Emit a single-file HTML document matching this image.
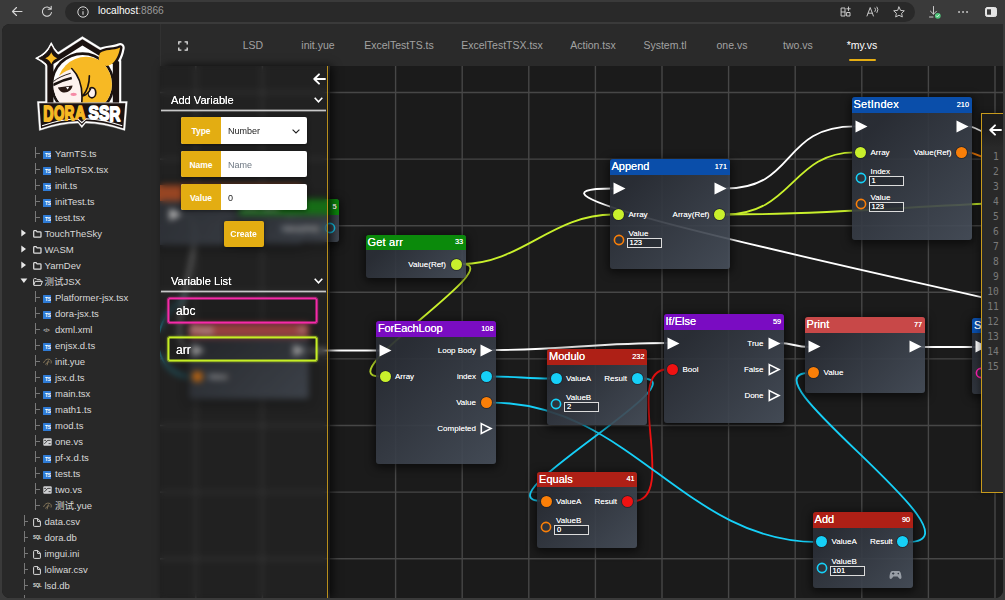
<!DOCTYPE html>
<html lang="en"><head><meta charset="utf-8"><title>Dora SSR</title>
<style>
*{box-sizing:border-box;margin:0;padding:0}
html,body{width:1005px;height:600px;overflow:hidden;background:#3a3a3a;font-family:"Liberation Sans","Noto Sans CJK SC",sans-serif}
#chrome{position:absolute;left:0;top:0;width:1005px;height:24px;background:#3a3a3a}
#url{position:absolute;left:65px;top:1.5px;width:850px;height:20px;border-radius:10px;background:#292929}
#url span{position:absolute;top:3.7px;font-size:10.2px;line-height:12px;color:#fff}
#win{position:absolute;left:2px;top:24px;width:1001px;height:573.7px;background:#1a1a1a;border-radius:8px 0 8px 8px;overflow:hidden}
#side{position:absolute;left:0;top:0;width:158px;height:574px;background:#282828}
#tabs{position:absolute;left:158px;top:0;width:843px;height:42px;background:#2a2a2a;border-left:1px solid #313131}
.tab{position:absolute;top:15px;width:120px;text-align:center;font-size:10.5px;line-height:12px;color:#a2a2a2}
.tab.on{color:#fff}
.tabul{position:absolute;left:687.5px;top:35px;width:27.5px;height:1.8px;background:#e6ae12;border-radius:1px}
#canvas{position:absolute;left:158px;top:42px;width:843px;height:532px;background:#1b1b1b;overflow:hidden}
#cv{position:absolute;left:-160px;top:-66px;width:1005px;height:600px}
#grid line{stroke:#474747;stroke-width:1.4}
#wires path{fill:none;stroke-width:1.85;stroke-linecap:round}
.node{position:absolute;border-radius:3px;background:linear-gradient(135deg,rgba(42,46,54,.93) 20%,rgba(71,79,91,.9) 100%);box-shadow:0 2px 9px 2px rgba(0,0,0,.55);font-family:"Liberation Sans","DejaVu Sans",sans-serif}
.hd{position:absolute;left:0;top:0;right:0;height:15.5px;border-radius:3px 3px 0 0}
.tt{position:absolute;left:2px;top:1px;font-size:11px;line-height:13px;color:#fff;text-shadow:0 0 .3px #fff}
.id{position:absolute;right:2.5px;top:3.5px;font-size:7.3px;line-height:8px;color:#fff;text-shadow:0 0 .4px #fff}
.pin{position:absolute;display:block}
.dot{position:absolute;width:11px;height:11px;border-radius:50%;box-shadow:0 0 0 .8px rgba(24,28,36,.7)}
.ring{position:absolute;width:11px;height:11px;border-radius:50%;border:1.6px solid #fff}
.lb{position:absolute;font-size:8px;line-height:10px;color:#fff;white-space:nowrap;text-shadow:0 0 .3px rgba(255,255,255,.6)}
.in{position:absolute;width:35px;height:10px;border:1px solid #dcdcdc;font-size:7.5px;line-height:8px;color:#fff;text-shadow:0 0 .4px #fff;padding-left:2px;background:rgba(30,34,40,.5)}
#lp{position:absolute;left:158px;top:42px;width:167.5px;height:532px;background:rgba(46,46,46,.32);-webkit-backdrop-filter:blur(3.4px);backdrop-filter:blur(3.4px);border-right:1px solid #b98f1c;box-shadow:4px 0 9px rgba(0,0,0,.75)}
.sec{position:absolute;left:1px;width:165px;height:18px}
.sec i{position:absolute;left:0;top:15.6px;width:165px;height:3px;background:linear-gradient(180deg,rgba(200,200,200,0) 0,rgba(200,200,200,.35) 16%,#c8c8c8 34%,#c8c8c8 66%,rgba(200,200,200,.35) 84%,rgba(200,200,200,0) 100%)}
.sec span{position:absolute;left:10px;top:1px;font-size:11.1px;line-height:13px;color:#fff;text-shadow:0 0 .5px #fff}
.sec svg{position:absolute;left:153px;top:4px}
.row{position:absolute;left:21px;width:126px;height:26.5px;background:#fff;border-radius:2px;overflow:hidden;box-shadow:0 1px 4px rgba(0,0,0,.5)}
.row b{position:absolute;left:0;top:0;width:40px;height:100%;background:#e3ad12;color:#fff;font-size:8.5px;line-height:28px;text-align:center;font-weight:bold}
.row span{position:absolute;left:47px;top:0;font-size:9px;line-height:28.5px;color:#1c1c1c}
.btn{position:absolute;left:63.5px;top:154.6px;width:40px;height:26.5px;background:#e3ad12;border-radius:2px;color:#fff;font-size:8.5px;line-height:26.5px;text-align:center;font-weight:bold;box-shadow:0 1px 4px rgba(0,0,0,.5)}
.var{position:absolute;left:7.6px;width:149.4px;height:24.8px;border:1px solid;background:rgba(10,10,10,.13);color:#fff;font-size:12px;line-height:25px;padding-left:7.5px;border-radius:1px;text-shadow:0 0 .5px #fff}
#rp{position:absolute;left:979.2px;top:89px;width:30px;height:379.5px;background:#292929;border:1px solid #c79a1c;box-shadow:-2px 0 6px rgba(0,0,0,.4)}
#rp .h{position:absolute;left:0;top:0;width:100%;height:34px;background:linear-gradient(180deg,#1d1d1d 40%,#292929)}
.ln{position:absolute;right:11.5px;font-family:"DejaVu Sans Mono","Liberation Mono",monospace;font-size:9.6px;line-height:12px;color:#7a7a7a}
.tr{position:absolute;left:0;width:158px;height:16px}
.tr .nm{position:absolute;top:2px;font-size:9.5px;line-height:12px;color:#d8d8d8;white-space:nowrap}
.icw{position:absolute;top:0;height:16px;width:10px}
.ic{position:absolute;left:0;top:4px;display:block}
.ic.ts{width:8px;height:8px;top:4.5px;background:#2f7bd6;color:#fff;font-size:5px;line-height:5px;font-weight:bold;padding:2.8px 0 0 1.6px;letter-spacing:-.2px;border-radius:.5px;overflow:hidden}
.ic.sql{width:9px;height:6px;top:5px;color:#ddd;font-size:4.5px;line-height:6px;font-weight:bold;letter-spacing:-.3px}
.ic.xml{width:9px;height:6px;top:5px;color:#bbb;font-size:5px;line-height:6px;font-weight:bold;letter-spacing:-.4px}
.br{position:absolute;top:1px;width:6px;height:10.5px;border-left:1px solid #787878}
.br:after{content:"";position:absolute;left:0;top:5.5px;width:3.8px;height:1px;background:#787878}
.ar{position:absolute;display:block}
</style></head><body>
<div id="chrome">
<svg style="position:absolute;left:0;top:0" width="1005" height="24" viewBox="0 0 1005 24" fill="none" stroke="#d6d6d6" stroke-width="1.1" stroke-linecap="round" stroke-linejoin="round">
<path d="M22 11.5 H12.5 M16.5 7.5 L12.5 11.5 L16.5 15.5"/>
<path d="M50.8 9 A4.6 4.6 0 1 0 51.5 12.5 M51.2 6.2 V9.2 H48.2"/>
</svg>
<div id="url"><svg style="position:absolute;left:12px;top:4px" width="12" height="12" viewBox="0 0 12 12"><circle cx="6" cy="6" r="5.2" fill="none" stroke="#d6d6d6" stroke-width="1"/><path d="M6 5.3 V8.8 M6 3.2 V4" stroke="#d6d6d6" stroke-width="1.1"/></svg><span style="left:33px">localhost<span style="position:static;color:#9a9a9a">:8866</span></span></div>
<svg style="position:absolute;left:830px;top:-0.5px" width="175" height="24" viewBox="830 0 175 24" fill="none" stroke="#c8c8c8" stroke-width="1" stroke-linecap="round" stroke-linejoin="round">
<path d="M841.5 8 H845 V16 H841.5 Z M841.5 12 H845 M847 12.5 H850 V16 H847 Z M848.5 7 V10.5 M846.8 8.8 H850.2"/>
<path d="M867 16 L870.2 7.5 L873.4 16 M868.2 13.2 H872.2 M875 8 Q876.5 9.5 875 11.5 M877 7 Q879 9.5 877 12.5"/>
<path d="M899 7 L900.6 10.4 L904.3 10.8 L901.6 13.3 L902.3 17 L899 15.2 L895.7 17 L896.4 13.3 L893.7 10.8 L897.4 10.4 Z"/>
<path d="M933.5 6.5 V14 M930.5 11.2 L933.5 14.2 L936.5 11.2 M929.5 17 H933"/>
<circle cx="937.8" cy="15.8" r="2.9" fill="#4fc47a" stroke="none"/><path d="M936.4 15.9 L937.4 16.9 L939.2 14.8" stroke="#fff" stroke-width=".8"/>
<path d="M959 12 h.1 M963 12 h.1 M967 12 h.1" stroke-width="1.8"/>
<rect x="985.5" y="7.5" width="11" height="9" rx="1.8" fill="#e4e4e4" stroke="#e4e4e4"/><rect x="987" y="9.3" width="4" height="5.4" fill="#3a3a3a" stroke="none"/>
</svg>
<div style="position:absolute;left:800px;top:2px;width:25px;height:20px"></div>
</div>
<div id="win">
<div id="canvas"><div id="cv">
<svg id="grid" style="position:absolute;left:0;top:0" width="1005" height="600"><line x1="129.2" y1="66" x2="129.2" y2="600"/><line x1="195.8" y1="66" x2="195.8" y2="600"/><line x1="262.4" y1="66" x2="262.4" y2="600"/><line x1="329.0" y1="66" x2="329.0" y2="600"/><line x1="395.6" y1="66" x2="395.6" y2="600"/><line x1="462.2" y1="66" x2="462.2" y2="600"/><line x1="528.8" y1="66" x2="528.8" y2="600"/><line x1="595.4" y1="66" x2="595.4" y2="600"/><line x1="662.0" y1="66" x2="662.0" y2="600"/><line x1="728.6" y1="66" x2="728.6" y2="600"/><line x1="795.2" y1="66" x2="795.2" y2="600"/><line x1="861.8" y1="66" x2="861.8" y2="600"/><line x1="928.4" y1="66" x2="928.4" y2="600"/><line x1="995.0" y1="66" x2="995.0" y2="600"/><line x1="1061.6" y1="66" x2="1061.6" y2="600"/><line x1="160" y1="92.5" x2="1005" y2="92.5"/><line x1="160" y1="159.1" x2="1005" y2="159.1"/><line x1="160" y1="225.7" x2="1005" y2="225.7"/><line x1="160" y1="292.3" x2="1005" y2="292.3"/><line x1="160" y1="358.9" x2="1005" y2="358.9"/><line x1="160" y1="425.5" x2="1005" y2="425.5"/><line x1="160" y1="492.1" x2="1005" y2="492.1"/><line x1="160" y1="558.7" x2="1005" y2="558.7"/><line x1="160" y1="625.3" x2="1005" y2="625.3"/></svg>
<svg id="wires" style="position:absolute;left:0;top:0" width="1005" height="600"><path d="M300 350.5 L380 350.5" stroke="#fff"/><path d="M462 264 C521.1 264 551.8 214.5 613 214.5" stroke="#c9f02c"/><path d="M462 264 C510.9 264 327.0 376.5 380 376.5" stroke="#c9f02c"/><path d="M493 350 C563.0 350 597.0 343 667 343" stroke="#fff"/><path d="M492 376.5 C517.0 376.5 526.0 378.5 551 378.5" stroke="#16d0f8"/><path d="M613 188.5 C431.1 188.5 1170.0 330 1100 330" stroke="#fff"/><path d="M725 188.5 C797.6 188.5 779.8 126.4 855 126.4" stroke="#fff"/><path d="M725 214.5 C793.2 214.5 791.4 152.4 855 152.4" stroke="#c9f02c"/><path d="M725 214.5 C830 214.5 900 207 1010 202.5" stroke="#c9f02c"/><path d="M967 126.4 C977.0 126.4 980.0 133 990 133" stroke="#fff"/><path d="M967 152.4 C977.0 152.4 980.0 158.5 990 158.5" stroke="#fa7f08"/><path d="M642 378.5 C704.2 378.5 476.3 501 542 501" stroke="#16d0f8"/><path d="M633.5 501 C679.3 501 621.8 369.5 667 369.5" stroke="#f01212"/><path d="M492 402.6 C629.1 402.6 685.1 542 817 542" stroke="#16d0f8"/><path d="M908 542 C991.5 542 739.0 373 809 373" stroke="#16d0f8"/><path d="M779 343 C793.0 343 795.0 347 809 347" stroke="#fff"/><path d="M921 347 L980 347" stroke="#fff"/><path d="M181 214 C222 214 152 350 193 350" stroke="rgba(255,255,255,.75)"/><path d="M193 377 C166 377 150 350 163 322 C168 311 176 303 186 297" stroke="rgba(22,208,248,.7)"/></svg>
<div class="node " style="left:365.5px;top:234.7px;width:100px;height:43.3px"><div class="hd" style="background:#0b8a0b"><span class="tt" style="letter-spacing:0.2px">Get arr</span><span class="id">33</span></div><span class="lb r" style="right:19.5px;top:25.7px">Value(Ref)</span><i class="dot" style="left:85.2px;top:24.5px;background:#c9f02c"></i></div><div class="node " style="left:609.5px;top:159.3px;width:120px;height:110px"><div class="hd" style="background:#0a4eaa"><span class="tt" style="letter-spacing:0px">Append</span><span class="id">171</span></div><svg class="pin" style="left:3px;top:22.5px" width="13" height="13" viewBox="0 0 13 13"><path d="M0.5 0.5 L12.5 6.5 L0.5 12.5 Z" fill="#fff"/></svg><svg class="pin" style="left:104px;top:22.5px" width="13" height="13" viewBox="0 0 13 13"><path d="M0.5 0.5 L12.5 6.5 L0.5 12.5 Z" fill="#fff"/></svg><i class="dot" style="left:3.5px;top:49.5px;background:#c9f02c"></i><span class="lb" style="left:19px;top:50.7px">Array</span><span class="lb r" style="right:20px;top:50.7px">Array(Ref)</span><i class="dot" style="left:104.5px;top:49.5px;background:#c9f02c"></i><svg class="pin" style="left:3px;top:75px" width="12" height="12" viewBox="0 0 12 12"><circle cx="6" cy="6" r="4.6" fill="none" stroke="#fa7f08" stroke-width="1.6"/></svg><span class="lb" style="left:19px;top:70px">Value</span><span class="in" style="left:17px;top:78.8px">123</span></div><div class="node " style="left:851.5px;top:97px;width:120px;height:143px"><div class="hd" style="background:#0a4eaa"><span class="tt" style="letter-spacing:0.25px">SetIndex</span><span class="id">210</span></div><svg class="pin" style="left:3px;top:22.5px" width="13" height="13" viewBox="0 0 13 13"><path d="M0.5 0.5 L12.5 6.5 L0.5 12.5 Z" fill="#fff"/></svg><svg class="pin" style="left:104px;top:22.5px" width="13" height="13" viewBox="0 0 13 13"><path d="M0.5 0.5 L12.5 6.5 L0.5 12.5 Z" fill="#fff"/></svg><i class="dot" style="left:3.5px;top:49.5px;background:#c9f02c"></i><span class="lb" style="left:19px;top:50.7px">Array</span><span class="lb r" style="right:20px;top:50.7px">Value(Ref)</span><i class="dot" style="left:104.5px;top:49.5px;background:#fa7f08"></i><svg class="pin" style="left:3px;top:75px" width="12" height="12" viewBox="0 0 12 12"><circle cx="6" cy="6" r="4.6" fill="none" stroke="#16d0f8" stroke-width="1.6"/></svg><span class="lb" style="left:19px;top:70px">Index</span><span class="in" style="left:17px;top:78.8px">1</span><svg class="pin" style="left:3px;top:101px" width="12" height="12" viewBox="0 0 12 12"><circle cx="6" cy="6" r="4.6" fill="none" stroke="#fa7f08" stroke-width="1.6"/></svg><span class="lb" style="left:19px;top:96px">Value</span><span class="in" style="left:17px;top:104.8px">123</span></div><div class="node " style="left:376px;top:321px;width:120px;height:143px"><div class="hd" style="background:#7a0cc2"><span class="tt" style="letter-spacing:-0.15px">ForEachLoop</span><span class="id">108</span></div><svg class="pin" style="left:3px;top:22.5px" width="13" height="13" viewBox="0 0 13 13"><path d="M0.5 0.5 L12.5 6.5 L0.5 12.5 Z" fill="#fff"/></svg><span class="lb r" style="right:20px;top:24.7px">Loop Body</span><svg class="pin" style="left:104px;top:22.5px" width="13" height="13" viewBox="0 0 13 13"><path d="M0.5 0.5 L12.5 6.5 L0.5 12.5 Z" fill="#fff"/></svg><i class="dot" style="left:3.5px;top:49.8px;background:#c9f02c"></i><span class="lb" style="left:19px;top:51.0px">Array</span><span class="lb r" style="right:20px;top:51.0px">index</span><i class="dot" style="left:104.5px;top:49.8px;background:#16d0f8"></i><span class="lb r" style="right:20px;top:77.0px">Value</span><i class="dot" style="left:104.5px;top:75.8px;background:#fa7f08"></i><span class="lb r" style="right:20px;top:103.10000000000001px">Completed</span><svg class="pin" style="left:104px;top:100.9px" width="13" height="13" viewBox="0 0 13 13"><path d="M1.3 1.6 L11 6.5 L1.3 11.4 Z" fill="none" stroke="#fff" stroke-width="1.6" stroke-linejoin="miter"/></svg></div><div class="node " style="left:547px;top:349.2px;width:100px;height:76.3px"><div class="hd" style="background:#ae2016"><span class="tt" style="letter-spacing:0px">Modulo</span><span class="id">232</span></div><i class="dot" style="left:3.5px;top:23.8px;background:#16d0f8"></i><span class="lb" style="left:19px;top:25.0px">ValueA</span><span class="lb r" style="right:20px;top:25.0px">Result</span><i class="dot" style="left:84.5px;top:23.8px;background:#16d0f8"></i><svg class="pin" style="left:3px;top:49px" width="12" height="12" viewBox="0 0 12 12"><circle cx="6" cy="6" r="4.6" fill="none" stroke="#16d0f8" stroke-width="1.6"/></svg><span class="lb" style="left:19px;top:44px">ValueB</span><span class="in" style="left:17px;top:52.8px">2</span></div><div class="node " style="left:663.5px;top:314px;width:120px;height:109px"><div class="hd" style="background:#7a0cc2"><span class="tt" style="letter-spacing:0px">If/Else</span><span class="id">59</span></div><svg class="pin" style="left:3px;top:22.5px" width="13" height="13" viewBox="0 0 13 13"><path d="M0.5 0.5 L12.5 6.5 L0.5 12.5 Z" fill="#fff"/></svg><span class="lb r" style="right:20px;top:24.7px">True</span><svg class="pin" style="left:104px;top:22.5px" width="13" height="13" viewBox="0 0 13 13"><path d="M0.5 0.5 L12.5 6.5 L0.5 12.5 Z" fill="#fff"/></svg><i class="dot" style="left:3.5px;top:49.5px;background:#f01212"></i><span class="lb" style="left:19px;top:50.7px">Bool</span><span class="lb r" style="right:20px;top:50.7px">False</span><svg class="pin" style="left:104px;top:48.5px" width="13" height="13" viewBox="0 0 13 13"><path d="M1.3 1.6 L11 6.5 L1.3 11.4 Z" fill="none" stroke="#fff" stroke-width="1.6" stroke-linejoin="miter"/></svg><span class="lb r" style="right:20px;top:76.7px">Done</span><svg class="pin" style="left:104px;top:74.5px" width="13" height="13" viewBox="0 0 13 13"><path d="M1.3 1.6 L11 6.5 L1.3 11.4 Z" fill="none" stroke="#fff" stroke-width="1.6" stroke-linejoin="miter"/></svg></div><div class="node " style="left:804.6px;top:317px;width:120px;height:76.3px"><div class="hd" style="background:#c84848"><span class="tt" style="letter-spacing:0px">Print</span><span class="id">77</span></div><svg class="pin" style="left:3px;top:22.5px" width="13" height="13" viewBox="0 0 13 13"><path d="M0.5 0.5 L12.5 6.5 L0.5 12.5 Z" fill="#fff"/></svg><svg class="pin" style="left:104px;top:22.5px" width="13" height="13" viewBox="0 0 13 13"><path d="M0.5 0.5 L12.5 6.5 L0.5 12.5 Z" fill="#fff"/></svg><i class="dot" style="left:3.5px;top:49.5px;background:#fa7f08"></i><span class="lb" style="left:19px;top:50.7px">Value</span></div><div class="node " style="left:537.1px;top:471.7px;width:100px;height:76.8px"><div class="hd" style="background:#ae2016"><span class="tt" style="letter-spacing:0px">Equals</span><span class="id">41</span></div><i class="dot" style="left:3.5px;top:24.0px;background:#fa7f08"></i><span class="lb" style="left:19px;top:25.2px">ValueA</span><span class="lb r" style="right:20px;top:25.2px">Result</span><i class="dot" style="left:84.5px;top:24.0px;background:#f01212"></i><svg class="pin" style="left:3px;top:49.5px" width="12" height="12" viewBox="0 0 12 12"><circle cx="6" cy="6" r="4.6" fill="none" stroke="#fa7f08" stroke-width="1.6"/></svg><span class="lb" style="left:19px;top:44.5px">ValueB</span><span class="in" style="left:17px;top:53.3px">0</span></div><div class="node " style="left:812.6px;top:512.3px;width:100px;height:76px"><div class="hd" style="background:#ae2016"><span class="tt" style="letter-spacing:0px">Add</span><span class="id">90</span></div><i class="dot" style="left:3.5px;top:24.0px;background:#16d0f8"></i><span class="lb" style="left:19px;top:25.2px">ValueA</span><span class="lb r" style="right:20px;top:25.2px">Result</span><i class="dot" style="left:84.5px;top:24.0px;background:#16d0f8"></i><svg class="pin" style="left:3px;top:49.5px" width="12" height="12" viewBox="0 0 12 12"><circle cx="6" cy="6" r="4.6" fill="none" stroke="#16d0f8" stroke-width="1.6"/></svg><span class="lb" style="left:19px;top:44.5px">ValueB</span><span class="in" style="left:17px;top:53.3px">101</span><svg class="pin" style="left:76px;top:58px" width="13" height="10" viewBox="0 0 13 10"><path d="M3.2 1 H9.8 C11.6 1 12.3 4.5 12.5 7 C12.6 9 11 9.5 10 8.2 L8.6 6.4 H4.4 L3 8.2 C2 9.5 0.4 9 0.5 7 C0.7 4.5 1.4 1 3.2 1 Z" fill="#989ea6"/><circle cx="9.3" cy="3.6" r="0.8" fill="#333a44"/><rect x="3" y="3.1" width="2.4" height="0.9" fill="#333a44"/><rect x="3.75" y="2.35" width="0.9" height="2.4" fill="#333a44"/></svg></div><div class="node " style="left:972px;top:317.5px;width:120px;height:76px"><div class="hd" style="background:#0a4eaa"><span class="tt" style="letter-spacing:0px">S</span><span class="id"></span></div><svg class="pin" style="left:3px;top:22.5px" width="13" height="13" viewBox="0 0 13 13"><path d="M0.5 0.5 L12.5 6.5 L0.5 12.5 Z" fill="#fff"/></svg><svg class="pin" style="left:3px;top:49px" width="12" height="12" viewBox="0 0 12 12"><circle cx="6" cy="6" r="4.6" fill="none" stroke="#ff20b0" stroke-width="1.6"/></svg></div><div class="node " style="left:120px;top:185px;width:182px;height:60px"><div class="hd" style="background:#c8501e"><span class="tt" style="letter-spacing:0px">OnStart</span><span class="id">1</span></div><svg class="pin" style="left:49px;top:22.5px" width="13" height="13" viewBox="0 0 13 13"><path d="M0.5 0.5 L12.5 6.5 L0.5 12.5 Z" fill="#fff"/></svg><svg class="pin" style="left:166px;top:22.5px" width="13" height="13" viewBox="0 0 13 13"><path d="M0.5 0.5 L12.5 6.5 L0.5 12.5 Z" fill="#fff"/></svg></div><div class="node " style="left:239px;top:199px;width:100px;height:43px"><div class="hd" style="background:#0b8a0b"><span class="tt" style="letter-spacing:0px">Get abc</span><span class="id">5</span></div><span class="lb r" style="right:20px;top:24.7px">Value(Ref)</span><svg class="pin" style="left:85px;top:23px" width="12" height="12" viewBox="0 0 12 12"><circle cx="6" cy="6" r="4.6" fill="none" stroke="#16d0f8" stroke-width="1.6"/></svg></div><div class="node " style="left:188.5px;top:322.5px;width:120px;height:76px"><div class="hd" style="background:#c84848"><span class="tt" style="letter-spacing:0px">Print</span><span class="id">12</span></div><svg class="pin" style="left:3px;top:21.5px" width="13" height="13" viewBox="0 0 13 13"><path d="M0.5 0.5 L12.5 6.5 L0.5 12.5 Z" fill="#fff"/></svg><svg class="pin" style="left:104px;top:21.5px" width="13" height="13" viewBox="0 0 13 13"><path d="M0.5 0.5 L12.5 6.5 L0.5 12.5 Z" fill="#fff"/></svg><i class="dot" style="left:3.5px;top:48.5px;background:#fa7f08"></i><span class="lb" style="left:19px;top:49.7px">Value</span></div>
</div></div>
<div id="side"><svg id="logo" style="position:absolute;left:28px;top:6px" width="105" height="110" viewBox="0 0 573 600">
<g fill="#fff" stroke="#fff" stroke-linejoin="round">
<path d="M286 36 L497 166 V395 H84 V166 Z" stroke-width="2"/>
<path d="M40 390 H531 L518 548 Q400 510 303 508 L283 533 L263 508 Q165 510 51 548 Z" stroke-width="2"/>
<path d="M116 70 Q141.2 128.8 200 154 Q141.2 179.2 116 238 Q90.8 179.2 32 154 Q90.8 128.8 116 70 Z" stroke-width="6"/>
<path d="M382 126 C408 104 458 114 492 96 C484 142 464 182 430 194 C394 204 360 172 382 126 Z" stroke-width="50"/>
</g>
<g fill="#1b1210" stroke="#1b1210" stroke-linejoin="round">
<path d="M286 50 L486 173 V395 H95 V173 Z" stroke-width="1"/>
<path d="M51 400 H520 L508.5 536 Q400 500 305 497 L283 520 L261 497 Q165 500 60.5 536 Z" stroke-width="1"/>
<path d="M116 86 Q136.4 133.6 184 154 Q136.4 174.4 116 222 Q95.6 174.4 48 154 Q95.6 133.6 116 86 Z" stroke-width="5"/>
<path d="M382 126 C408 104 458 114 492 96 C484 142 464 182 430 194 C394 204 360 172 382 126 Z" stroke-width="26"/>
</g>
<path d="M286 84 L452 186 V395 H128 V186 Z" fill="#fff"/>
<clipPath id="lgc"><rect x="95" y="100" width="392" height="294"/></clipPath>
<clipPath id="lgh"><circle cx="287" cy="296" r="160"/></clipPath>
<g clip-path="url(#lgc)">
<circle cx="287" cy="296" r="175" fill="#1b1210"/>
<circle cx="287" cy="296" r="160" fill="#fff"/>
<g clip-path="url(#lgh)">
<circle cx="306" cy="302" r="156" fill="#f7b924"/>
<path d="M231 212 C256 240 287 292 283 400 L140 400 C112 360 114 312 126 288 C150 250 190 224 231 212 Z" fill="#fdf1ee"/>
<path d="M118 304 C150 286 190 270 228 262" fill="none" stroke="#1b1210" stroke-width="14"/>
<path d="M126 282 C150 262 186 246 222 236" fill="none" stroke="#1b1210" stroke-width="5"/>
<path d="M152 313 L232 303 C230 330 202 346 176 339 C165 334 157 323 152 313 Z" fill="#2a1915"/>
<path d="M196 312 L214 309 L206 324 Z" fill="#fff"/>
<ellipse cx="238" cy="351" rx="17" ry="9" fill="#f58aa6"/>
<ellipse cx="338" cy="342" rx="21" ry="28" fill="#fdf1ee" stroke="#1b1210" stroke-width="9"/>
<path d="M231 212 C258 240 290 296 282 400 L318 400 C312 370 318 350 322 330 C326 300 326 275 322 252 C300 226 266 212 231 212 Z" fill="#f7b924"/>
<path d="M228 210 C258 240 292 300 282 400 M324 250 C324 300 308 336 288 360 C306 356 322 340 330 322" fill="none" stroke="#1b1210" stroke-width="9" stroke-linecap="round" stroke-linejoin="round"/>
</g></g>
<path d="M116 121 Q124.25 145.75 149 154 Q124.25 162.25 116 187 Q107.75 162.25 83 154 Q107.75 145.75 116 121 Z" fill="#f7b924"/>
<path d="M382 126 C408 104 458 114 492 96 C484 142 464 182 430 194 C394 204 360 172 382 126 Z" fill="#f7b924"/>
<path d="M66 522 Q165 488 259 484 L283 506 L307 484 Q400 488 503 522" fill="none" stroke="#fff" stroke-width="6"/>
<text transform="translate(72.58064516129032 411.5) scale(0.774 1.180)" x="0" y="72.9" font-family="Liberation Sans,sans-serif" font-weight="bold" font-size="100" fill="#f7b924" stroke="#f7b924" stroke-width="9" stroke-linejoin="round">D</text><text transform="translate(131.0857142857143 411.5) scale(0.729 1.125)" x="0" y="72.9" font-family="Liberation Sans,sans-serif" font-weight="bold" font-size="100" fill="#f7b924" stroke="#f7b924" stroke-width="9" stroke-linejoin="round">O</text><text transform="translate(187.8030303030303 411.5) scale(0.742 1.070)" x="0" y="72.9" font-family="Liberation Sans,sans-serif" font-weight="bold" font-size="100" fill="#f7b924" stroke="#f7b924" stroke-width="9" stroke-linejoin="round">R</text><text transform="translate(246.0 411.5) scale(0.792 1.015)" x="0" y="72.9" font-family="Liberation Sans,sans-serif" font-weight="bold" font-size="100" fill="#f7b924" stroke="#f7b924" stroke-width="9" stroke-linejoin="round">A</text><text transform="translate(318.6 411.5) scale(0.850 1.015)" x="0" y="72.9" font-family="Liberation Sans,sans-serif" font-weight="bold" font-size="100" fill="#fff" stroke="#fff" stroke-width="9" stroke-linejoin="round">S</text><text transform="translate(376.6 411.5) scale(0.850 1.070)" x="0" y="72.9" font-family="Liberation Sans,sans-serif" font-weight="bold" font-size="100" fill="#fff" stroke="#fff" stroke-width="9" stroke-linejoin="round">S</text><text transform="translate(434.27272727272725 411.5) scale(0.818 1.139)" x="0" y="72.9" font-family="Liberation Sans,sans-serif" font-weight="bold" font-size="100" fill="#fff" stroke="#fff" stroke-width="9" stroke-linejoin="round">R</text>
</svg><div class="tr" style="top:122px"><span class="br" style="left:33px"></span><span class="icw" style="left:41.3px"><span class="ic ts">TS</span></span><span class="nm" style="left:53px">YarnTS.ts</span></div><div class="tr" style="top:138px"><span class="br" style="left:33px"></span><span class="icw" style="left:41.3px"><span class="ic ts">TS</span></span><span class="nm" style="left:53px">helloTSX.tsx</span></div><div class="tr" style="top:154px"><span class="br" style="left:33px"></span><span class="icw" style="left:41.3px"><span class="ic ts">TS</span></span><span class="nm" style="left:53px">init.ts</span></div><div class="tr" style="top:170px"><span class="br" style="left:33px"></span><span class="icw" style="left:41.3px"><span class="ic ts">TS</span></span><span class="nm" style="left:53px">initTest.ts</span></div><div class="tr" style="top:186px"><span class="br" style="left:33px"></span><span class="icw" style="left:41.3px"><span class="ic ts">TS</span></span><span class="nm" style="left:53px">test.tsx</span></div><div class="tr" style="top:202px"><svg class="ar" style="left:19.3px;top:3.2px" width="6" height="8" viewBox="0 0 6 8"><path d="M0.3 0.5 L5 4 L0.3 7.5 Z" fill="#e8e8e8"/></svg><span class="icw" style="left:31px"><svg class="ic" width="9" height="8" viewBox="0 0 9 8"><path d="M0.7 1.5 Q0.7 0.7 1.5 0.7 H3.1 L4.1 1.8 H7.2 Q8 1.8 8 2.6 V6.4 Q8 7.2 7.2 7.2 H1.5 Q0.7 7.2 0.7 6.4 Z" fill="none" stroke="#ddd" stroke-width="1.25"/></svg></span><span class="nm" style="left:42.5px">TouchTheSky</span></div><div class="tr" style="top:218px"><svg class="ar" style="left:19.3px;top:3.2px" width="6" height="8" viewBox="0 0 6 8"><path d="M0.3 0.5 L5 4 L0.3 7.5 Z" fill="#e8e8e8"/></svg><span class="icw" style="left:31px"><svg class="ic" width="9" height="8" viewBox="0 0 9 8"><path d="M0.7 1.5 Q0.7 0.7 1.5 0.7 H3.1 L4.1 1.8 H7.2 Q8 1.8 8 2.6 V6.4 Q8 7.2 7.2 7.2 H1.5 Q0.7 7.2 0.7 6.4 Z" fill="none" stroke="#ddd" stroke-width="1.25"/></svg></span><span class="nm" style="left:42.5px">WASM</span></div><div class="tr" style="top:234px"><svg class="ar" style="left:19.3px;top:3.2px" width="6" height="8" viewBox="0 0 6 8"><path d="M0.3 0.5 L5 4 L0.3 7.5 Z" fill="#e8e8e8"/></svg><span class="icw" style="left:31px"><svg class="ic" width="9" height="8" viewBox="0 0 9 8"><path d="M0.7 1.5 Q0.7 0.7 1.5 0.7 H3.1 L4.1 1.8 H7.2 Q8 1.8 8 2.6 V6.4 Q8 7.2 7.2 7.2 H1.5 Q0.7 7.2 0.7 6.4 Z" fill="none" stroke="#ddd" stroke-width="1.25"/></svg></span><span class="nm" style="left:42.5px">YarnDev</span></div><div class="tr" style="top:250px"><svg class="ar" style="left:18.3px;top:4px" width="8" height="6" viewBox="0 0 8 6"><path d="M0.5 0.5 L7.3 0.5 L3.9 5 Z" fill="#e8e8e8"/></svg><span class="icw" style="left:31px"><svg class="ic" width="10" height="8" viewBox="0 0 10 8"><path d="M0.6 6.8 V1.4 Q0.6 0.6 1.4 0.6 H3.2 L4.2 1.7 H7 Q7.8 1.7 7.8 2.5 V3.2 M0.7 7.2 L2.2 3.4 H9.4 L7.9 7.4 H0.8" fill="none" stroke="#ddd" stroke-width="1"/></svg></span><span class="nm" style="left:42.5px">测试JSX</span></div><div class="tr" style="top:266px"><span class="br" style="left:33px"></span><span class="icw" style="left:41.3px"><span class="ic ts">TS</span></span><span class="nm" style="left:53px">Platformer-jsx.tsx</span></div><div class="tr" style="top:282px"><span class="br" style="left:33px"></span><span class="icw" style="left:41.3px"><span class="ic ts">TS</span></span><span class="nm" style="left:53px">dora-jsx.ts</span></div><div class="tr" style="top:298px"><span class="br" style="left:33px"></span><span class="icw" style="left:41.3px"><span class="ic xml">&lt;/&gt;</span></span><span class="nm" style="left:53px">dxml.xml</span></div><div class="tr" style="top:314px"><span class="br" style="left:33px"></span><span class="icw" style="left:41.3px"><span class="ic ts">TS</span></span><span class="nm" style="left:53px">enjsx.d.ts</span></div><div class="tr" style="top:330px"><span class="br" style="left:33px"></span><span class="icw" style="left:41.3px"><svg class="ic" width="9" height="8" viewBox="0 0 9 8"><path d="M0.5 5 C1.5 2 4 0.8 6 1.2 C8 1.6 8.8 3.5 8 5.5 M2.5 6.5 C3.5 4.5 5 3.5 6.5 4 M4 7.4 L5.4 2.4" fill="none" stroke="#8a7a5c" stroke-width="0.9"/></svg></span><span class="nm" style="left:53px">init.yue</span></div><div class="tr" style="top:346px"><span class="br" style="left:33px"></span><span class="icw" style="left:41.3px"><span class="ic ts">TS</span></span><span class="nm" style="left:53px">jsx.d.ts</span></div><div class="tr" style="top:362px"><span class="br" style="left:33px"></span><span class="icw" style="left:41.3px"><span class="ic ts">TS</span></span><span class="nm" style="left:53px">main.tsx</span></div><div class="tr" style="top:378px"><span class="br" style="left:33px"></span><span class="icw" style="left:41.3px"><span class="ic ts">TS</span></span><span class="nm" style="left:53px">math1.ts</span></div><div class="tr" style="top:394px"><span class="br" style="left:33px"></span><span class="icw" style="left:41.3px"><span class="ic ts">TS</span></span><span class="nm" style="left:53px">mod.ts</span></div><div class="tr" style="top:410px"><span class="br" style="left:33px"></span><span class="icw" style="left:41.3px"><svg class="ic" width="9" height="8" viewBox="0 0 9 8"><rect x="0.3" y="0.3" width="8.4" height="7.4" rx="1" fill="#cfd0d2"/><path d="M1.2 5.6 C3 5.6 3.2 2.4 5 2.4 H7.6 M1.2 2.4 H3 M5.6 5.6 H7.6" stroke="#3a3a3a" stroke-width="0.9" fill="none"/></svg></span><span class="nm" style="left:53px">one.vs</span></div><div class="tr" style="top:426px"><span class="br" style="left:33px"></span><span class="icw" style="left:41.3px"><span class="ic ts">TS</span></span><span class="nm" style="left:53px">pf-x.d.ts</span></div><div class="tr" style="top:442px"><span class="br" style="left:33px"></span><span class="icw" style="left:41.3px"><span class="ic ts">TS</span></span><span class="nm" style="left:53px">test.ts</span></div><div class="tr" style="top:458px"><span class="br" style="left:33px"></span><span class="icw" style="left:41.3px"><svg class="ic" width="9" height="8" viewBox="0 0 9 8"><rect x="0.3" y="0.3" width="8.4" height="7.4" rx="1" fill="#cfd0d2"/><path d="M1.2 5.6 C3 5.6 3.2 2.4 5 2.4 H7.6 M1.2 2.4 H3 M5.6 5.6 H7.6" stroke="#3a3a3a" stroke-width="0.9" fill="none"/></svg></span><span class="nm" style="left:53px">two.vs</span></div><div class="tr" style="top:474px"><span class="br" style="left:33px"></span><span class="icw" style="left:41.3px"><svg class="ic" width="9" height="8" viewBox="0 0 9 8"><path d="M0.5 5 C1.5 2 4 0.8 6 1.2 C8 1.6 8.8 3.5 8 5.5 M2.5 6.5 C3.5 4.5 5 3.5 6.5 4 M4 7.4 L5.4 2.4" fill="none" stroke="#8a7a5c" stroke-width="0.9"/></svg></span><span class="nm" style="left:53px">测试.yue</span></div><div class="tr" style="top:490px"><span class="br" style="left:21.5px"></span><span class="icw" style="left:31px"><svg class="ic" width="8" height="9" viewBox="0 0 8 9"><path d="M1.4 0.6 H4.8 L7.4 3.2 V7.8 Q7.4 8.4 6.8 8.4 H1.4 Q0.6 8.4 0.6 7.8 V1.4 Q0.6 0.6 1.4 0.6 Z M4.6 0.8 V3.4 H7.2" fill="none" stroke="#ddd" stroke-width="1"/></svg></span><span class="nm" style="left:42.5px">data.csv</span></div><div class="tr" style="top:506px"><span class="br" style="left:21.5px"></span><span class="icw" style="left:31px"><span class="ic sql">SQL</span></span><span class="nm" style="left:42.5px">dora.db</span></div><div class="tr" style="top:522px"><span class="br" style="left:21.5px"></span><span class="icw" style="left:31px"><svg class="ic" width="8" height="9" viewBox="0 0 8 9"><path d="M1.4 0.6 H4.8 L7.4 3.2 V7.8 Q7.4 8.4 6.8 8.4 H1.4 Q0.6 8.4 0.6 7.8 V1.4 Q0.6 0.6 1.4 0.6 Z M4.6 0.8 V3.4 H7.2" fill="none" stroke="#ddd" stroke-width="1"/></svg></span><span class="nm" style="left:42.5px">imgui.ini</span></div><div class="tr" style="top:538px"><span class="br" style="left:21.5px"></span><span class="icw" style="left:31px"><svg class="ic" width="8" height="9" viewBox="0 0 8 9"><path d="M1.4 0.6 H4.8 L7.4 3.2 V7.8 Q7.4 8.4 6.8 8.4 H1.4 Q0.6 8.4 0.6 7.8 V1.4 Q0.6 0.6 1.4 0.6 Z M4.6 0.8 V3.4 H7.2" fill="none" stroke="#ddd" stroke-width="1"/></svg></span><span class="nm" style="left:42.5px">loliwar.csv</span></div><div class="tr" style="top:554px"><span class="br" style="left:21.5px"></span><span class="icw" style="left:31px"><span class="ic sql">SQL</span></span><span class="nm" style="left:42.5px">lsd.db</span></div><div class="tr" style="top:570px"><span class="br" style="left:21.5px"></span></div></div>
<div id="tabs"><svg style="position:absolute;left:17px;top:16.5px" width="10" height="10" viewBox="0 0 10 10" fill="none" stroke="#e6e6e6" stroke-width="1.3"><path d="M0.8 3.4 V0.8 H3.4 M6.6 0.8 H9.2 V3.4 M9.2 6.6 V9.2 H6.6 M3.4 9.2 H0.8 V6.6"/></svg><span class="tab" style="left:32px">LSD</span><span class="tab" style="left:97px">init.yue</span><span class="tab" style="left:178px">ExcelTestTS.ts</span><span class="tab" style="left:281px">ExcelTestTSX.tsx</span><span class="tab" style="left:372px">Action.tsx</span><span class="tab" style="left:444px">System.tl</span><span class="tab" style="left:511px">one.vs</span><span class="tab" style="left:577px">two.vs</span><span class="tab on" style="left:641px">*my.vs</span><i class="tabul"></i></div>
<div id="lp">
<svg style="position:absolute;left:153px;top:6.5px" width="13" height="12" viewBox="0 0 13 12" fill="none" stroke="#fff" stroke-width="1.9" stroke-linecap="round" stroke-linejoin="round"><path d="M12 6 H1.5 M6 1.3 L1.3 6 L6 10.7"/></svg>
<div class="sec" style="top:27px"><i></i><span>Add Variable</span><svg width="9" height="6" viewBox="0 0 9 6" fill="none" stroke="#fff" stroke-width="1.6"><path d="M0.7 0.8 L4.5 4.8 L8.3 0.8"/></svg></div>
<div class="row" style="top:51.3px"><b>Type</b><span>Number</span><svg style="position:absolute;left:111px;top:11.3px" width="8" height="5" viewBox="0 0 8 5" fill="none" stroke="#222" stroke-width="1.1"><path d="M0.6 0.6 L4 4 L7.4 0.6"/></svg></div>
<div class="row" style="top:84.6px"><b>Name</b><span style="color:#6d7782">Name</span></div>
<div class="row" style="top:117.8px"><b>Value</b><span>0</span></div>
<div class="btn">Create</div>
<div class="sec" style="top:208px"><i></i><span>Variable List</span><svg width="9" height="6" viewBox="0 0 9 6" fill="none" stroke="#fff" stroke-width="1.6"><path d="M0.7 0.8 L4.5 4.8 L8.3 0.8"/></svg></div>
<div class="var" style="top:231.8px;border-color:#f62aa8;box-shadow:0 0 0 .5px #f62aa8,inset 0 0 0 .5px #f62aa8,0 0 3px #f62aa8">abc</div>
<div class="var" style="top:270.6px;border-color:#c5ee25;box-shadow:0 0 0 .5px #c5ee25,inset 0 0 0 .5px #c5ee25,0 0 3px #c5ee25">arr</div>
</div>
<div id="rp"><div class="h"></div><svg style="position:absolute;left:7px;top:10px" width="13" height="12" viewBox="0 0 13 12" fill="none" stroke="#fff" stroke-width="1.9" stroke-linecap="round" stroke-linejoin="round"><path d="M12 6 H1.5 M6 1.3 L1.3 6 L6 10.7"/></svg><span class="ln" style="top:36.5px">1</span><span class="ln" style="top:51.5px">2</span><span class="ln" style="top:66.5px">3</span><span class="ln" style="top:81.5px">4</span><span class="ln" style="top:96.5px">5</span><span class="ln" style="top:111.5px">6</span><span class="ln" style="top:126.5px">7</span><span class="ln" style="top:141.5px">8</span><span class="ln" style="top:156.5px">9</span><span class="ln" style="top:171.5px">10</span><span class="ln" style="top:186.5px">11</span><span class="ln" style="top:201.5px">12</span><span class="ln" style="top:216.5px">13</span><span class="ln" style="top:231.5px">14</span><span class="ln" style="top:246.5px">15</span></div>
</div>
</body></html>
